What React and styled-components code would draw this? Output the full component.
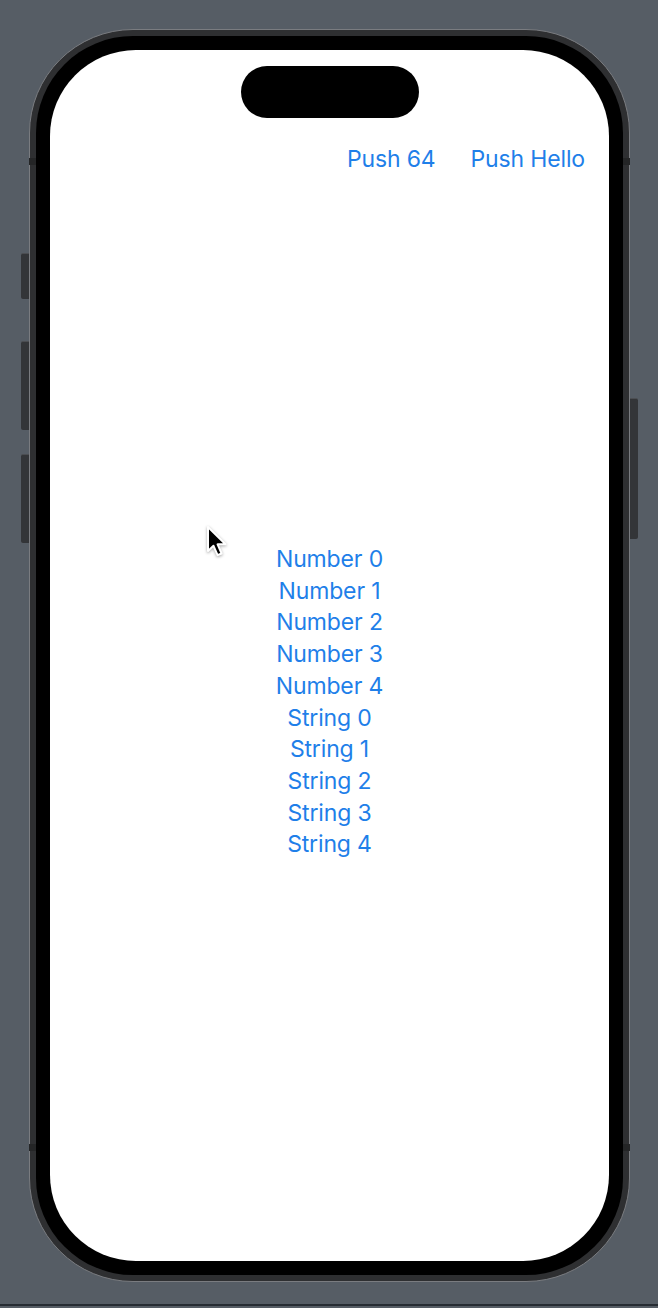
import React from "react";
import styled, { createGlobalStyle } from "styled-components";

const GlobalStyle = createGlobalStyle`
  html, body {
    margin: 0;
    padding: 0;
    background: #565d65;
  }
  body {
    font-family: Inter, "Noto Sans", "Liberation Sans", sans-serif;
  }
`;

const Desk = styled.div`
  height: 1306px;
  border-bottom: 2px solid #272c33;
  display: flex;
  justify-content: center;
  align-items: flex-start;
  padding-top: 29px;
  padding-left: 1px;
  box-sizing: border-box;
`;

const Rail = styled.div`
  width: 8px;
  display: flex;
  flex-direction: column;
  padding-top: ${(p) => p.$offset}px;
`;

const SideButton = styled.div`
  height: ${(p) => p.$height}px;
  margin-top: ${(p) => p.$space || 0}px;
  background: #333538;
  border-top: 1px solid #4c4e52;
  border-radius: ${(p) => (p.$right ? "0 2px 2px 0" : "2px 0 0 2px")};
`;

const Frame = styled.div`
  position: relative;
  width: 601px;
  height: 1253px;
  box-sizing: border-box;
  border-radius: 104px;
  border: 1px solid #7a7c80;
  background: #2e2f31;
  padding: 6px;
`;

const Band = styled.div`
  position: absolute;
  ${(p) => (p.$right ? "right: -1px;" : "left: -1px;")}
  top: ${(p) => p.$top}px;
  width: 7px;
  height: 7px;
  background: #242526;
`;

const Bezel = styled.div`
  height: 100%;
  box-sizing: border-box;
  border-radius: 97px;
  background: #000;
  padding: 14px;
`;

const Screen = styled.div`
  height: 100%;
  border-radius: 86px;
  background: #fff;
  overflow: hidden;
  display: flex;
  flex-direction: column;
  position: relative;
`;

const Island = styled.div`
  align-self: center;
  margin-top: 16px;
  width: 178px;
  height: 52px;
  border-radius: 26px;
  background: #000;
  flex-shrink: 0;
`;

const NavBar = styled.div`
  height: 62px;
  margin-top: 10px;
  display: flex;
  justify-content: flex-end;
  align-items: center;
  gap: 35px;
  padding-right: 24px;
  flex-shrink: 0;
`;

const BarButton = styled.span`
  font-size: 23px;
  color: #1f7fe9;
  letter-spacing: -0.15px;
`;

const Content = styled.div`
  flex: 1;
  display: flex;
  flex-direction: column;
  align-items: center;
  justify-content: center;
  padding-bottom: 46px;
`;

const Row = styled.div`
  font-size: 23px;
  line-height: 31.7px;
  color: #1f7fe9;
  letter-spacing: -0.15px;
`;

const Cursor = styled.svg`
  position: absolute;
  left: 155px;
  top: 475px;
  width: 26px;
  height: 36px;
  filter: drop-shadow(0 1px 1.5px rgba(0, 0, 0, 0.35));
`;

const leftButtons = [
  { height: 45, space: 0 },
  { height: 88, space: 42 },
  { height: 88, space: 24 },
];

const rows = [
  ...[0, 1, 2, 3, 4].map((n) => `Number ${n}`),
  ...[0, 1, 2, 3, 4].map((n) => `String ${n}`),
];

const App = () => {
  return (
    <>
      <GlobalStyle />
      <Desk>
        <Rail $offset={224}>
          {leftButtons.map((b, i) => (
            <SideButton key={i} $height={b.height} $space={b.space} />
          ))}
        </Rail>
        <Frame>
          <Band $top={128} />
          <Band $right $top={128} />
          <Band $top={1114} />
          <Band $right $top={1114} />
          <Bezel>
            <Screen>
              <Island />
              <NavBar>
                <BarButton>Push 64</BarButton>
                <BarButton>Push Hello</BarButton>
              </NavBar>
              <Content>
                {rows.map((r) => (
                  <Row key={r}>{r}</Row>
                ))}
              </Content>
              <Cursor viewBox="0 0 26 36">
                <path
                  d="M3 2 L3 26 L8.5 20.8 L12.6 30.2 L16.6 28.5 L12.6 19.3 L20.5 19.3 Z"
                  fill="#000"
                  stroke="#fff"
                  strokeWidth="2"
                  strokeLinejoin="round"
                />
              </Cursor>
            </Screen>
          </Bezel>
        </Frame>
        <Rail $offset={369}>
          <SideButton $right $height={140} />
        </Rail>
      </Desk>
    </>
  );
};

export default App;
